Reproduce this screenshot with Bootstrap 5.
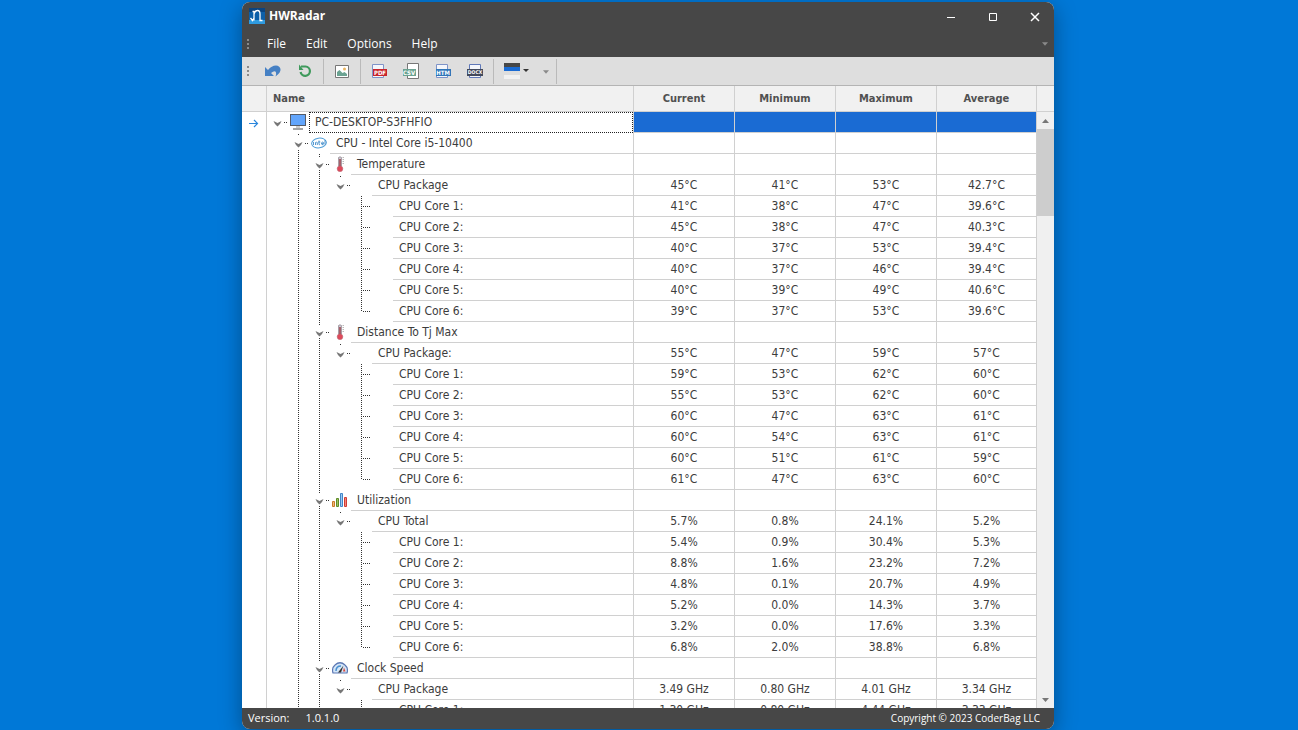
<!DOCTYPE html>
<html lang="en">
<head>
<meta charset="utf-8">
<meta name="viewport" content="width=device-width, initial-scale=1">
<title>HWRadar</title>
<link href="https://cdn.jsdelivr.net/npm/bootstrap@5.3.0/dist/css/bootstrap.min.css" rel="stylesheet">
<style>
  body { background: #0078d7; font-family: "DejaVu Sans Condensed", "DejaVu Sans", sans-serif; font-size: 12px; color: #3c3c3c; }
  .desktop { padding: 2px 244px 1px 242px; }
  .app-window { background: #fff; border-radius: 8px; box-shadow: 0 6px 22px rgba(0,0,0,.35); min-width: 0; }
  .ui-text { font-family: "Open Sans", "Noto Sans", sans-serif; }
  .chrome { background: #474747; color: #fff; flex: none; }
  .title-bar { height: 28px; padding-left: 7px; font-size: 12px; font-weight: 700; }
  .win-btn { width: 42px; height: 28px; background: none; border: 0; color: #fff; padding: 0 0 0 4px; }
  .menu-bar { height: 27px; padding: 0 6px 0 5px; font-size: 12px; }
  .menu-bar a { color: #fff; text-decoration: none; padding: 0 10px; }
  .grip { color: #8a8a8a; flex: none; }
  .tool-bar { background: #dedede; height: 29px; border-bottom: 1px solid #b4b4b4; padding: 0 5px; flex: none; }
  .tool-btn { width: 32px; height: 28px; background: none; border: 0; padding: 0; line-height: 1; }
  .tool-sep { width: 1px; height: 25px; background: #bababa; margin: 0 2px; }
  .scheme-btn { width: 40px; }
  .more-btn { width: 20px; color: #8a8a8a; }
  .badge-text { font: bold 6px "DejaVu Sans Condensed", sans-serif; fill: #fff; text-anchor: middle; }
  .badge-text.long { font-size: 5px; }
  .grid-body { min-height: 0; }
  .sensor-grid { table-layout: fixed; width: 100%; border-collapse: separate; border-spacing: 0; }
  .sensor-grid th { height: 26px; background: #f1f1f1; border-right: 1px solid #d0d0d0; border-bottom: 1px solid #d0d0d0; padding: 0; font-size: 11px; line-height: 25px; color: #505050; text-align: center; }
  .sensor-grid th.name-head { text-align: left; padding-left: 6px; }
  .sensor-grid td { height: 21px; line-height: 20px; padding: 0; border-right: 1px solid #d0d0d0; }
  .sensor-grid .val { border-bottom: 1px solid #d0d0d0; text-align: center; }
  .sensor-grid .picked .val { background: #1a6bd3; }
  .ind { width: 25px; }
  .num { width: 101px; }
  .num:last-child { width: 100px; }
  .slot { width: 21px; height: 21px; flex: none; }
  .row-label { border-bottom: 1px solid #d0d0d0; padding-left: 6px; height: 21px; white-space: nowrap; }
  .picked .row-label { border: 1px dotted #222; line-height: 19px; padding-left: 5px; }
  .dots { stroke: #333; stroke-dasharray: 1 1; fill: none; }
  tr:nth-child(even) .dots { stroke-dashoffset: 1; }
  .scroll-col { width: 17px; background: #f0f0f0; color: #777; flex: none; }
  .scroll-head { height: 26px; background: #f1f1f1; border-bottom: 1px solid #d0d0d0; }
  .scroll-btn { height: 17px; background: none; border: 0; padding: 0; line-height: 1; color: #777; }
  .thumb { height: 87px; background: #cdcdcd; }
  .status-bar { height: 21px; padding: 0 14px 0 6px; font-size: 11px; }
  .copyright { font-size: 10px; }
</style>
</head>
<body>
<svg class="d-none">
  <symbol id="i-pc" viewBox="0 0 16 16"><path d="M0 0h16v12H0z" fill="#555b66"/><path d="M1 1h14v10H1z" fill="#62a5fb"/><path d="M6 12h4v2H6z" fill="#ccc"/><path d="M3 14h10v2H3z" fill="#a4a4a4"/></symbol>
  <symbol id="i-intel" viewBox="0 0 16 16"><ellipse cx="8" cy="8" rx="7.4" ry="4.9" fill="#fff" stroke="#4e9dd8" transform="rotate(-8 8 8)"/><path d="M2.500 7v3M4.500 10V7.500q1.500-1 1.800.3V10M8 5.500V9q0 1 1 .8M7.300 7h2M10.500 8.600h2.200q0-1.500-1.100-1.500t-1.100 1.500 2 1.100M14 5v4.500" fill="none" stroke="#2b7fc4" stroke-width=".8"/></symbol>
  <symbol id="i-temp" viewBox="0 0 16 16"><path d="M6.500 1.500q1.500-1.500 3 0V10h-3z" fill="#c9ccd4" stroke="#9b8c96" stroke-width=".8"/><path d="M8 3v9" stroke="#9e4650" stroke-width="1.600"/><circle cx="8" cy="12.800" r="2.800" fill="#e0495a" stroke="#b96570" stroke-width=".6"/><path d="M10.500 1.500H12M10.500 3.500H12M10.500 5.500H12M10.500 7.500H12" stroke="#bbb"/></symbol>
  <symbol id="i-bars" viewBox="0 0 16 16"><path d="M.5 9.500h2v5h-2z" fill="#f0b878" stroke="#c87a28"/><path d="M4.500 6.500h2v8h-2z" fill="#9fc060" stroke="#5e8c28"/><path d="M8.500 1.500h2v13h-2z" fill="#9cc8f0" stroke="#4186c8"/><path d="M12.500 5.500h2v9h-2z" fill="#f08478" stroke="#d03c34"/></symbol>
  <symbol id="i-clock" viewBox="0 0 16 16"><path d="M1 13Q-.5 8 3 5q5-4.500 10 0 3.500 3 2 8z" fill="#d4e6f8" stroke="#5c78b4" stroke-width="1.200"/><path d="M4 11q0-5 5-5" stroke="#4a90d0" fill="none" stroke-width="1.500"/><path d="M6 12.500l5.500-7-2.500 7z" fill="#333"/><path d="M12 7.500l1.500 4h-2.500z" fill="#e0483c"/></symbol>
  <symbol id="i-down" viewBox="0 0 7 4"><path d="M0 0h7L3.500 4z" fill="currentColor"/></symbol>
  <symbol id="i-grip" viewBox="0 0 2 10"><path d="M0 0h2v2H0zM0 4h2v2H0zM0 8h2v2H0z" fill="currentColor"/></symbol>
</svg>

<main class="desktop vh-100 d-flex">
  <div class="app-window flex-fill d-flex flex-column overflow-hidden">
    <header class="chrome ui-text">
      <div class="title-bar d-flex align-items-center">
        <svg width="16" height="16" viewBox="0 0 16 16"><path d="M0 0h16v16H0z" fill="#0d5fa8"/><path d="M0 0h16v4H0z" fill="#0a4480"/><path d="M0 12h16v4H0z" fill="#2f9be0"/><path d="M5 12.500V3.500H3.500M5 6q1-3.500 3.500-3.500T11 6v6.500h2.500M1.500 10l2 2.500L5 10" fill="none" stroke="#fff" stroke-width="1.300"/></svg>
        <span class="ps-1 me-auto">HWRadar</span>
        <button class="win-btn" aria-label="Minimize"><svg width="10" height="10"><path d="M1 5.500h8" stroke="#fff"/></svg></button>
        <button class="win-btn" aria-label="Maximize"><svg width="10" height="10"><path d="M1.500 1.500h7v7h-7z" fill="none" stroke="#fff"/></svg></button>
        <button class="win-btn" aria-label="Close"><svg width="10" height="10"><path d="M1 1l8 8M9 1l-8 8" stroke="#fff" stroke-width="1.500"/></svg></button>
      </div>
      <nav class="menu-bar d-flex align-items-center">
        <svg class="grip me-2" width="2" height="10"><use href="#i-grip"/></svg>
        <a href="#">File</a><a href="#">Edit</a><a href="#">Options</a><a href="#">Help</a>
        <svg class="ms-auto grip" width="6" height="4"><use href="#i-down"/></svg>
      </nav>
    </header>

    <div class="tool-bar d-flex align-items-center" role="toolbar" aria-label="Tools">
      <svg class="grip me-2" width="2" height="10"><use href="#i-grip"/></svg>
      <button class="tool-btn" aria-label="Undo"><svg width="16" height="16" viewBox="0 0 16 16"><path d="M0 4l0 9h9L6 10q4-3 5-.5.500 1.500-.5 4Q16 9.500 15.500 6 14.500 2.500 11 2.500 6.500 2.500 3 7z" fill="#4580c4"/></svg></button>
      <button class="tool-btn" aria-label="Refresh"><svg width="16" height="16"><path d="M4 3.500h4.500a4.700 4.700 0 1 1-4.900 5.500" fill="none" stroke="#3f9a5c" stroke-width="2.200"/><path d="M2 1.500V7h4.500z" fill="#3f9a5c"/></svg></button>
      <span class="tool-sep"></span>
      <button class="tool-btn" aria-label="Export image"><svg width="16" height="16"><path d="M1.500 2.500h13v12h-13z" fill="#fff" stroke="#777"/><path d="M3 13V9l2.500-2 3 3 2-1 2.500 2v2z" fill="#6ba392"/><circle cx="10.500" cy="6" r="1.500" fill="#eab560"/></svg></button>
      <span class="tool-sep"></span>
      <button class="tool-btn" aria-label="Export PDF"><svg width="16" height="16"><path d="M1.500 1.500h11v13h-11z" fill="#f4f6fb" stroke="#7e93c8"/><path d="M2 6h14v7H2z" fill="#c8252c"/><text class="badge-text" x="9" y="12">PDF</text></svg></button>
      <button class="tool-btn" aria-label="Export CSV"><svg width="16" height="16"><path d="M4.500.5h11v15h-11z" fill="#fff" stroke="#777"/><path d="M0 6h13v7H0z" fill="#6ba392"/><text class="badge-text" x="6" y="12">CSV</text></svg></button>
      <button class="tool-btn" aria-label="Export HTML"><svg width="16" height="16"><path d="M1.500 1.500h11v13h-11z" fill="#f4f6fb" stroke="#7e93c8"/><path d="M1 6h15v7H1z" fill="#2f75b8"/><text class="badge-text" x="8" y="12">HTM</text></svg></button>
      <button class="tool-btn" aria-label="Export DOCX"><svg width="16" height="16"><path d="M2.500 1.500h11v13h-11z" fill="#f4f6fb" stroke="#5f78b8"/><path d="M0 6h16v7H0z" fill="#434a5c"/><text class="badge-text long" x="8" y="11">DOCX</text></svg></button>
      <span class="tool-sep"></span>
      <button class="tool-btn scheme-btn" aria-label="Color scheme"><svg width="25" height="16"><path d="M0 0h16v4H0z" fill="#474747"/><path d="M0 4h16v4H0z" fill="#1a6bd3"/><path d="M0 8h16v4H0z" fill="#dedede"/><path d="M0 12h16v4H0z" fill="#f1f1f1"/><path d="M19 6h6l-3 3z" fill="#333"/></svg></button>
      <button class="tool-btn more-btn" aria-label="More tools"><svg width="6" height="4"><use href="#i-down"/></svg></button>
      <span class="tool-sep m-0"></span>
    </div>

    <div class="grid-body flex-fill d-flex overflow-hidden">
      <div class="flex-fill overflow-hidden">
        <table class="sensor-grid">
          <thead><tr><th class="ind"></th><th class="name-head">Name</th><th class="num">Current</th><th class="num">Minimum</th><th class="num">Maximum</th><th class="num">Average</th></tr></thead>
          <tbody id="sensors"></tbody>
        </table>
      </div>
      <div class="scroll-col d-flex flex-column">
        <div class="scroll-head"></div>
        <button class="scroll-btn" aria-label="Scroll up"><svg width="7" height="4"><path d="M0 4h7L3.500 0z" fill="currentColor"/></svg></button>
        <div class="thumb"></div>
        <button class="scroll-btn mt-auto" aria-label="Scroll down"><svg width="7" height="4"><use href="#i-down"/></svg></button>
      </div>
    </div>

    <footer class="chrome ui-text status-bar d-flex align-items-center">
      <span>Version:</span><span class="ms-3">1.0.1.0</span>
      <span class="ms-auto copyright">Copyright © 2023 CoderBag LLC</span>
    </footer>
  </div>
</main>

<script src="https://cdn.jsdelivr.net/npm/bootstrap@5.3.0/dist/js/bootstrap.bundle.min.js"></script>
<script>
  // level, label, icon, readings
  const rows = [
    [0, 'PC-DESKTOP-S3FHFIO', 'pc'],
    [1, 'CPU - Intel Core i5-10400', 'intel'],
    [2, 'Temperature', 'temp'],
    [3, 'CPU Package', '', '45°C', '41°C', '53°C', '42.7°C'],
    [4, 'CPU Core 1:', '', '41°C', '38°C', '47°C', '39.6°C'],
    [4, 'CPU Core 2:', '', '45°C', '38°C', '47°C', '40.3°C'],
    [4, 'CPU Core 3:', '', '40°C', '37°C', '53°C', '39.4°C'],
    [4, 'CPU Core 4:', '', '40°C', '37°C', '46°C', '39.4°C'],
    [4, 'CPU Core 5:', '', '40°C', '39°C', '49°C', '40.6°C'],
    [4, 'CPU Core 6:', '', '39°C', '37°C', '53°C', '39.6°C'],
    [2, 'Distance To Tj Max', 'temp'],
    [3, 'CPU Package:', '', '55°C', '47°C', '59°C', '57°C'],
    [4, 'CPU Core 1:', '', '59°C', '53°C', '62°C', '60°C'],
    [4, 'CPU Core 2:', '', '55°C', '53°C', '62°C', '60°C'],
    [4, 'CPU Core 3:', '', '60°C', '47°C', '63°C', '61°C'],
    [4, 'CPU Core 4:', '', '60°C', '54°C', '63°C', '61°C'],
    [4, 'CPU Core 5:', '', '60°C', '51°C', '61°C', '59°C'],
    [4, 'CPU Core 6:', '', '61°C', '47°C', '63°C', '60°C'],
    [2, 'Utilization', 'bars'],
    [3, 'CPU Total', '', '5.7%', '0.8%', '24.1%', '5.2%'],
    [4, 'CPU Core 1:', '', '5.4%', '0.9%', '30.4%', '5.3%'],
    [4, 'CPU Core 2:', '', '8.8%', '1.6%', '23.2%', '7.2%'],
    [4, 'CPU Core 3:', '', '4.8%', '0.1%', '20.7%', '4.9%'],
    [4, 'CPU Core 4:', '', '5.2%', '0.0%', '14.3%', '3.7%'],
    [4, 'CPU Core 5:', '', '3.2%', '0.0%', '17.6%', '3.3%'],
    [4, 'CPU Core 6:', '', '6.8%', '2.0%', '38.8%', '6.8%'],
    [2, 'Clock Speed', 'clock'],
    [3, 'CPU Package', '', '3.49 GHz', '0.80 GHz', '4.01 GHz', '3.34 GHz'],
    [4, 'CPU Core 1:', '', '1.30 GHz', '0.80 GHz', '4.44 GHz', '3.33 GHz']
  ];
  const slot = inner => `<svg class="slot" viewBox="0 0 21 21">${inner}</svg>`;
  const chevron = '<path d="M6.500 9l4 2 4-2-1.500 3-2.500 2.500L8 12z" fill="#777"/><path d="M17 10.500H21" stroke="#333" stroke-dasharray="1 1"/>';

  document.getElementById('sensors').innerHTML = rows.map(([level, label, icon, ...values], i) => {
    let tree = '';
    for (let k = 0; k < level; k++) {
      tree += slot(k === 1 || k === 2 ? '<path class="dots" d="M10.500 0v21"/>' : '');
    }
    if (level === 4) {
      const last = i + 1 < rows.length && rows[i + 1][0] !== 4;
      tree += slot(`<path class="dots" d="M10.500 0v${last ? 11 : 21}"/><path d="M12 10.500H20" stroke="#333" stroke-dasharray="1 1"/>`);
    } else {
      tree += slot((level ? '<path class="dots" d="M10.500 0v3"/>' : '') + chevron +
        (level === 1 || level === 2 ? '<path class="dots" d="M10.500 16v5"/>' : ''));
    }
    tree += slot(icon ? `<use href="#i-${icon}" x="2" y="2" width="16" height="16"/>` : '');
    const pointer = level ? '' : '<svg width="10" height="9"><path d="M0 4.500h8.500M5 1l3.500 3.500L5 8" fill="none" stroke="#2a86dc" stroke-width="1.200"/></svg>';
    const cells = [0, 1, 2, 3].map(n => `<td class="val">${values[n] || ''}</td>`).join('');
    return `<tr class="${level ? '' : 'picked'}"><td class="text-center">${pointer}</td>` +
      `<td><div class="d-flex">${tree}<div class="row-label flex-fill">${label}</div></div></td>${cells}</tr>`;
  }).join('');
</script>
</body>
</html>
